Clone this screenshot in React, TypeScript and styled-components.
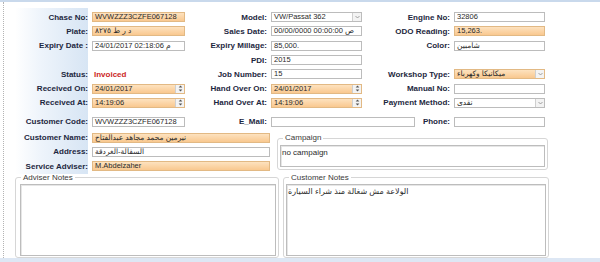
import React from "react";
import styled, { createGlobalStyle } from "styled-components";

const GlobalStyle = createGlobalStyle`
  html, body { margin: 0; padding: 0; background: #ffffff; }
  body { font-family: "Liberation Sans", "DejaVu Sans", Arial, sans-serif; }
`;

const Page = styled.div`
  width: 600px;
  height: 262px;
  box-sizing: border-box;
  border-top: 2px solid #c9d9ec;
  display: flex;
  flex-direction: column;
  overflow: hidden;
`;

const Body = styled.div`
  height: 256px;
  margin-left: 3px;
  padding-left: 11px;
  border-left: 1px dotted #b4b4b4;
  box-sizing: border-box;
  overflow: hidden;
  display: flex;
  flex-direction: column;
`;

const BottomBand = styled.div`
  height: 4px;
  background: #dde7f4;
`;

const FormArea = styled.div`
  padding-top: 8px;
  background: linear-gradient(to right, #ffffff 0%, #eef4fb 35%, #d7e5f4 100%) no-repeat;
  background-size: 73px calc(100% - 6px);
  background-position: 0 6px;
`;

const Grid = styled.div<{ $mt?: number }>`
  display: grid;
  grid-template-columns: 77px 93px 86px 91px 92px 91px;
  grid-auto-rows: 14.3px;
  margin-top: ${(p) => p.$mt ?? 0}px;
`;

const Label = styled.div`
  display: flex;
  align-items: center;
  justify-content: flex-end;
  padding-right: 4px;
  font-size: 8px;
  font-weight: bold;
  color: #1d2740;
  white-space: nowrap;
`;

const Cell = styled.div<{ $span?: number }>`
  display: flex;
  align-items: center;
  justify-content: space-between;
  grid-column: span ${(p) => p.$span ?? 1};
  min-width: 0;
`;

const Box = styled.div<{ $orange?: boolean; $w?: number }>`
  position: relative;
  height: 10px;
  width: ${(p) => (p.$w ? `${p.$w}px` : "100%")};
  box-sizing: border-box;
  border: 1px solid ${(p) => (p.$orange ? "#e2b984" : "#bcbcbc")};
  background: ${(p) =>
    p.$orange ? "linear-gradient(to bottom, #fde2bf, #f9c88f)" : "#ffffff"};
  padding: 0 2px;
  font-size: 7.5px;
  line-height: 8px;
  color: #2a2a2a;
  white-space: nowrap;
  overflow: hidden;
`;

const Status = styled.span`
  padding-left: 2px;
  font-size: 8px;
  font-weight: bold;
  color: #cc1f1f;
`;

const Side = styled.span`
  position: absolute;
  top: 0;
  right: 0;
  width: 9px;
  height: 8px;
  box-sizing: border-box;
  border-left: 1px solid #cfcfcf;
  background: #f3f3f3;
  display: flex;
  align-items: center;
  justify-content: center;
`;

const LowerRow = styled.div`
  display: flex;
  align-items: flex-start;
  margin-top: 1.5px;
`;

const LowerGrid = styled.div`
  display: grid;
  grid-template-columns: 77px 178px;
  grid-auto-rows: 14.4px;
`;

const Group = styled.fieldset<{ $w: number; $ml?: number; $mt?: number }>`
  width: ${(p) => p.$w}px;
  margin: ${(p) => p.$mt ?? 0}px 0 0 ${(p) => p.$ml ?? 0}px;
  padding: 0 2px 2px 2px;
  box-sizing: border-box;
  border: 1px solid #d6d6d6;
  border-radius: 3px;
  min-width: 0;
`;

const Legend = styled.legend`
  margin-left: 3px;
  padding: 0 2px;
  font-size: 8px;
  line-height: 8px;
  color: #3a3a3a;
`;

const Area = styled.div<{ $h: number }>`
  height: ${(p) => p.$h}px;
  margin-top: 2.5px;
  box-sizing: border-box;
  border: 1px solid #bdbdbd;
  box-shadow: inset 1px 1px 0 #e6e6e6;
  padding: 2px 1px;
  font-size: 8px;
  line-height: 9px;
  color: #2a2a2a;
  background: #ffffff;
`;

const NotesRow = styled.div`
  display: flex;
  gap: 4px;
  flex: 1;
  min-height: 0;
`;

function Arrow() {
  return (
    <Side>
      <svg width="5" height="4" viewBox="0 0 5 4">
        <path d="M0.5 1 L2.5 3 L4.5 1" fill="none" stroke="#8a8a8a" strokeWidth="0.8" />
      </svg>
    </Side>
  );
}

function Spin() {
  return (
    <Side>
      <svg width="5" height="7" viewBox="0 0 5 7">
        <path d="M2.5 0.5 L4.3 2.6 L0.7 2.6 Z" fill="#555" />
        <path d="M2.5 6.5 L4.3 4.4 L0.7 4.4 Z" fill="#555" />
      </svg>
    </Side>
  );
}

export default function App() {
  return (
    <>
      <GlobalStyle />
      <Page>
        <Body>
          <FormArea>
            <Grid>
              <Label>Chase No:</Label>
              <Cell><Box $orange>WVWZZZ3CZFE067128</Box></Cell>
              <Label>Model:</Label>
              <Cell><Box>VW/Passat 362<Arrow /></Box></Cell>
              <Label>Engine No:</Label>
              <Cell><Box>32806</Box></Cell>

              <Label>Plate:</Label>
              <Cell><Box $orange>د ر ط ٨٢٧٥</Box></Cell>
              <Label>Sales Date:</Label>
              <Cell><Box>00/00/0000 00:00:00 ص</Box></Cell>
              <Label>ODO Reading:</Label>
              <Cell><Box $orange>15,263.</Box></Cell>

              <Label>Expiry Date :</Label>
              <Cell><Box>24/01/2017 02:18:06 م</Box></Cell>
              <Label>Expiry Millage:</Label>
              <Cell><Box>85,000.</Box></Cell>
              <Label>Color:</Label>
              <Cell><Box>شامبين</Box></Cell>

              <Label />
              <Cell />
              <Label>PDI:</Label>
              <Cell><Box>2015</Box></Cell>
              <Label />
              <Cell />

              <Label>Status:</Label>
              <Cell><Status>Invoiced</Status></Cell>
              <Label>Job Number:</Label>
              <Cell><Box>15</Box></Cell>
              <Label>Workshop Type:</Label>
              <Cell><Box $orange>ميكانيكا وكهرباء<Arrow /></Box></Cell>

              <Label>Received On:</Label>
              <Cell><Box $orange>24/01/2017<Spin /></Box></Cell>
              <Label>Hand Over On:</Label>
              <Cell><Box $orange>24/01/2017<Spin /></Box></Cell>
              <Label>Manual No:</Label>
              <Cell><Box /></Cell>

              <Label>Received At:</Label>
              <Cell><Box $orange>14:19:06<Spin /></Box></Cell>
              <Label>Hand Over At:</Label>
              <Cell><Box $orange>14:19:06<Spin /></Box></Cell>
              <Label>Payment Method:</Label>
              <Cell><Box>نقدى<Arrow /></Box></Cell>
            </Grid>

            <Grid $mt={4.5}>
              <Label>Customer Code:</Label>
              <Cell><Box>WVWZZZ3CZFE067128</Box></Cell>
              <Label>E_Mail:</Label>
              <Cell $span={2}>
                <Box $w={144} />
                <Label>Phone:</Label>
              </Cell>
              <Cell><Box /></Cell>
            </Grid>

            <LowerRow>
              <LowerGrid>
                <Label>Customer Name:</Label>
                <Cell><Box $orange>نيرمين محمد مجاهد عبدالفتاح</Box></Cell>
                <Label>Address:</Label>
                <Cell><Box>السقالة-الغردقة</Box></Cell>
                <Label>Service Adviser:</Label>
                <Cell><Box $orange>M.Abdelzaher</Box></Cell>
              </LowerGrid>
              <Group $w={271} $ml={7} $mt={4}>
                <Legend>Campaign</Legend>
                <Area $h={22}>no campaign</Area>
              </Group>
            </LowerRow>
          </FormArea>

          <NotesRow>
            <Group $w={264}>
              <Legend>Adviser Notes</Legend>
              <Area $h={72} style={{ marginLeft: 2 }} />
            </Group>
            <Group $w={266}>
              <Legend>Customer Notes</Legend>
              <Area $h={72}>الولاعة مش شغالة منذ شراء السيارة</Area>
            </Group>
          </NotesRow>
        </Body>
        <BottomBand />
      </Page>
    </>
  );
}
